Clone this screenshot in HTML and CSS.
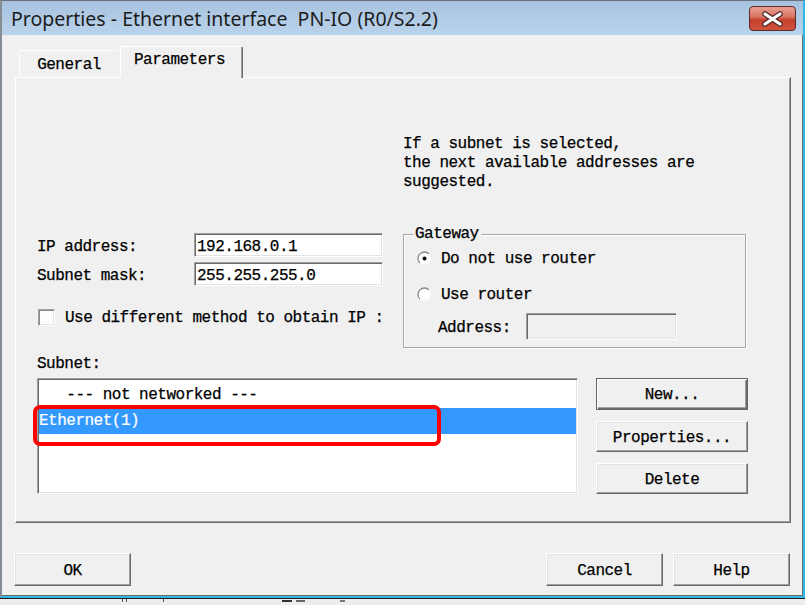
FILE: index.html
```html
<!DOCTYPE html>
<html lang="en">
<head>
<meta charset="utf-8">
<title>Properties - Ethernet interface</title>
<link rel="stylesheet" href="styles.css">
</head>
<body>
<div class="window">
  <div class="titlebar">
    <span class="title">Properties - Ethernet interface  PN-IO (R0/S2.2)</span>
    <div class="close">
      <svg width="47" height="25" viewBox="0 0 47 25">
        <defs>
          <linearGradient id="cg" x1="0" y1="0" x2="0" y2="1">
            <stop offset="0" stop-color="#e9a394"/>
            <stop offset="0.45" stop-color="#d6705e"/>
            <stop offset="0.55" stop-color="#c4412c"/>
            <stop offset="1" stop-color="#d0543c"/>
          </linearGradient>
        </defs>
        <rect x="0.5" y="0.5" width="46" height="24" rx="3.5" fill="url(#cg)" stroke="#5b2a2e"/>
        <path d="M16 8 L31 18 M31 8 L16 18" stroke="#4b2326" stroke-width="5.5" stroke-linecap="round"/>
        <path d="M16 8 L31 18 M31 8 L16 18" stroke="#ffffff" stroke-width="3.2" stroke-linecap="round"/>
      </svg>
    </div>
  </div>
  <div class="content">
    <div class="tabs">
      <div class="tab">General</div>
      <div class="tab active">Parameters</div>
    </div>
    <div class="panel">
      <div class="upper">
        <p class="info">If a subnet is selected,<br>the next available addresses are<br>suggested.</p>
        <div class="fields">
          <div class="field-row">
            <span class="field-label">IP address:</span>
            <div class="input">192.168.0.1</div>
          </div>
          <div class="field-row">
            <span class="field-label">Subnet mask:</span>
            <div class="input">255.255.255.0</div>
          </div>
          <div class="check-row">
            <span class="checkbox"></span>
            <span class="check-text">Use different method to obtain IP :</span>
          </div>
        </div>
        <fieldset class="gateway">
          <legend>Gateway</legend>
          <div class="radio-row">
            <svg class="radio" width="15" height="15" viewBox="0 0 15 15">
              <circle cx="7.5" cy="7.5" r="6.5" fill="#fff"/>
              <path d="M2.9 12.1 A6.5 6.5 0 0 1 12.1 2.9" fill="none" stroke="#8a8a8a" stroke-width="1.3"/>
              <path d="M12.1 2.9 A6.5 6.5 0 0 1 2.9 12.1" fill="none" stroke="#f4f4f4" stroke-width="1.3"/>
              <circle cx="7.5" cy="7.5" r="2" fill="#000"/>
            </svg>
            <span class="radio-text">Do not use router</span>
          </div>
          <div class="radio-row second">
            <svg class="radio" width="15" height="15" viewBox="0 0 15 15">
              <circle cx="7.5" cy="7.5" r="6.5" fill="#fff"/>
              <path d="M2.9 12.1 A6.5 6.5 0 0 1 12.1 2.9" fill="none" stroke="#8a8a8a" stroke-width="1.3"/>
              <path d="M12.1 2.9 A6.5 6.5 0 0 1 2.9 12.1" fill="none" stroke="#f4f4f4" stroke-width="1.3"/>
            </svg>
            <span class="radio-text">Use router</span>
          </div>
          <div class="address-row">
            <span class="address-label">Address:</span>
            <div class="input disabled"></div>
          </div>
        </fieldset>
      </div>
      <div class="subnet-label">Subnet:</div>
      <div class="lower">
        <div class="listbox">
          <div class="item">   --- not networked ---</div>
          <div class="item selected">Ethernet(1)</div>
          <div class="annotation"></div>
        </div>
        <div class="side-buttons">
          <div class="btn default">New...</div>
          <div class="btn">Properties...</div>
          <div class="btn">Delete</div>
        </div>
      </div>
    </div>
    <div class="footer">
      <div class="btn wide ok">OK</div>
      <div class="spacer"></div>
      <div class="btn wide">Cancel</div>
      <div class="btn wide help">Help</div>
    </div>
  </div>
</div>
<div class="backdrop">
  <span class="tick t1"></span><span class="tick t2"></span><span class="tick t3"></span>
  <span class="tick t4"></span><span class="tick t5"></span><span class="tick t6"></span>
</div>
</body>
</html>
```
FILE: styles.css
```css
html, body {
  margin: 0;
  padding: 0;
}
body {
  width: 805px;
  height: 605px;
  overflow: hidden;
  background: #f3f3f3;
  font-family: "Liberation Mono", "DejaVu Sans Mono", monospace;
  font-size: 16px;
  letter-spacing: -0.5px;
  color: #000;
  -webkit-text-stroke: 0.25px #000;
}
.window {
  width: 805px;
  height: 598px;
  box-sizing: border-box;
  border-top: 1px solid #6a737d;
  border-left: 2px solid #858c94;
  border-right: 2px solid #2fb8e6;
  border-bottom: 2px solid #2fb8e6;
  background: #f0f0f0;
  display: flex;
  flex-direction: column;
  box-shadow: inset -1px -1px 0 #6f6f6f;
}
.titlebar {
  height: 34px;
  flex: none;
  display: flex;
  align-items: center;
  justify-content: space-between;
  padding: 0 7px 0 9px;
  background: linear-gradient(#a8c3df, #bad3ec);
}
.title {
  font-family: "Noto Sans", "Open Sans", sans-serif;
  font-size: 19.5px;
  letter-spacing: 0;
  -webkit-text-stroke: 0;
  color: #1c1c1c;
  white-space: pre;
}
.close {
  width: 47px;
  height: 25px;
  display: flex;
}
.content {
  flex: 1;
  display: flex;
  flex-direction: column;
  padding: 11px 12px 10px 13px;
  min-height: 0;
}
.tabs {
  height: 31px;
  flex: none;
  display: flex;
  align-items: flex-end;
  padding-left: 4px;
  gap: 2px;
  position: relative;
  z-index: 1;
}
.tab {
  height: 27px;
  box-sizing: border-box;
  width: 99px;
  border-top: 1px solid #fff;
  border-left: 1px solid #fff;
  border-radius: 2px 2px 0 0;
  display: flex;
  align-items: center;
  justify-content: center;
  padding-top: 1px;
}
.tab.active {
  width: 123px;
  height: 32px;
  margin-bottom: -1px;
  background: #f0f0f0;
  border-right: 1px solid #696969;
  box-shadow: inset -1px 0 0 #a0a0a0;
  padding-bottom: 6px;
  padding-right: 4px;
}
.panel {
  flex: 1;
  box-sizing: border-box;
  border-top: 1px solid #fff;
  border-left: 1px solid #fff;
  border-right: 1px solid #696969;
  border-bottom: 1px solid #696969;
  box-shadow: inset -1px -1px 0 #a0a0a0;
  padding: 55px 0 0 21px;
}
.upper {
  display: grid;
  grid-template-columns: 366px 343px;
  row-gap: 33px;
}
.info {
  grid-column: 2;
  grid-row: 1;
  margin: 2px 0 0 0;
  line-height: 19px;
  white-space: nowrap;
}
.fields {
  grid-column: 1;
  grid-row: 2;
  margin-top: 8px;
  display: flex;
  flex-direction: column;
  gap: 5px;
}
.field-row {
  display: flex;
  align-items: center;
  height: 24px;
}
.field-label {
  width: 157px;
  padding-top: 3px;
}
.input {
  box-sizing: border-box;
  width: 189px;
  height: 24px;
  background: #fff;
  border: 1px solid;
  border-color: #a0a0a0 #ffffff #ffffff #a0a0a0;
  box-shadow: inset 1px 1px 0 #696969, inset -1px -1px 0 #e3e3e3;
  padding: 3px 0 0 2px;
  line-height: 20px;
  white-space: nowrap;
}
.check-row {
  margin-top: 17px;
  display: flex;
  align-items: center;
  gap: 10px;
  height: 18px;
  white-space: nowrap;
}
.check-text {
  padding-top: 2px;
}
.checkbox {
  width: 17px;
  height: 17px;
  box-sizing: border-box;
  margin-left: 1px;
  background: #fdfdfd;
  border: 1px solid;
  border-color: #a0a0a0 #ffffff #ffffff #a0a0a0;
  box-shadow: inset 1px 1px 0 #8a8a8a, inset -1px -1px 0 #e3e3e3;
}
.gateway {
  grid-column: 2;
  grid-row: 2;
  margin: 0;
  min-width: 0;
  box-sizing: border-box;
  width: 343px;
  padding: 3px 7px 7px 13px;
  border: 1px solid #a7a7a7;
  box-shadow: 1px 1px 0 #fff, inset 1px 1px 0 #fff;
}
.gateway legend {
  padding: 0 2px;
  margin-left: -4px;
  line-height: 18px;
  background: #f0f0f0;
}
.radio-row {
  height: 24px;
  display: flex;
  align-items: center;
  gap: 9px;
}
.radio-text {
  padding-top: 2px;
}
.radio-row.second {
  margin-top: 12px;
}
.radio {
  flex: none;
}
.address-row {
  margin-top: 7px;
  display: flex;
  align-items: center;
  padding-left: 21px;
}
.address-label {
  width: 88px;
  padding-top: 2px;
}
.input.disabled {
  width: 151px;
  height: 27px;
  background: #f0f0f0;
}
.subnet-label {
  margin-top: 7px;
  line-height: 18px;
}
.lower {
  margin-top: 5px;
  display: flex;
  align-items: flex-start;
}
.listbox {
  position: relative;
  box-sizing: border-box;
  width: 541px;
  height: 116px;
  background: #fff;
  border: 1px solid;
  border-color: #a0a0a0 #ffffff #ffffff #a0a0a0;
  box-shadow: inset 1px 1px 0 #696969, inset -1px -1px 0 #e3e3e3;
  padding: 3px 1px 0 1px;
}
.item {
  height: 26px;
  line-height: 26px;
  white-space: pre;
  padding-left: 0;
}
.item.selected {
  background: #3399ff;
  color: #fff;
  -webkit-text-stroke: 0.2px #fff;
}
.annotation {
  position: absolute;
  left: -5px;
  top: 26px;
  width: 408px;
  height: 41px;
  box-sizing: border-box;
  border: 4px solid #ff0000;
  border-radius: 7px;
}
.side-buttons {
  margin-left: 18px;
  width: 152px;
  display: flex;
  flex-direction: column;
  gap: 11px;
}
.btn {
  box-sizing: border-box;
  height: 31px;
  display: flex;
  align-items: center;
  justify-content: center;
  padding-top: 2px;
  background: #f0f0f0;
  border: 1px solid;
  border-color: #ffffff #696969 #696969 #ffffff;
  box-shadow: inset -1px -1px 0 #a0a0a0, inset 1px 1px 0 #e3e3e3;
  white-space: nowrap;
}
.btn.default {
  height: 32px;
  border: 1px solid #646464;
  box-shadow: inset 1px 1px 0 #ffffff, inset -1px -1px 0 #696969, inset -2px -2px 0 #a0a0a0;
}
.footer {
  margin-top: 30px;
  height: 33px;
  flex: none;
  display: flex;
}
.btn.wide {
  width: 117px;
  height: 33px;
}
.btn.ok {
  margin-left: -1px;
}
.spacer {
  flex: 1;
}
.btn.help {
  margin-left: 10px;
  margin-right: 1px;
}
.backdrop {
  height: 7px;
  box-sizing: border-box;
  border-top: 1px solid #1a1a1a;
  background: #ededed;
  position: relative;
  overflow: hidden;
}
.tick {
  position: absolute;
  top: 0;
  width: 1px;
  height: 3px;
  background: #555;
}
.t1 { left: 122px; }
.t2 { left: 126px; }
.t3 { left: 163px; }
.t4 { left: 282px; width: 10px; height: 2px; top: 1px; background: #333; }
.t5 { left: 296px; width: 9px; height: 2px; top: 1px; background: #666; }
.t6 { left: 340px; width: 5px; height: 2px; top: 1px; background: #777; }
```
